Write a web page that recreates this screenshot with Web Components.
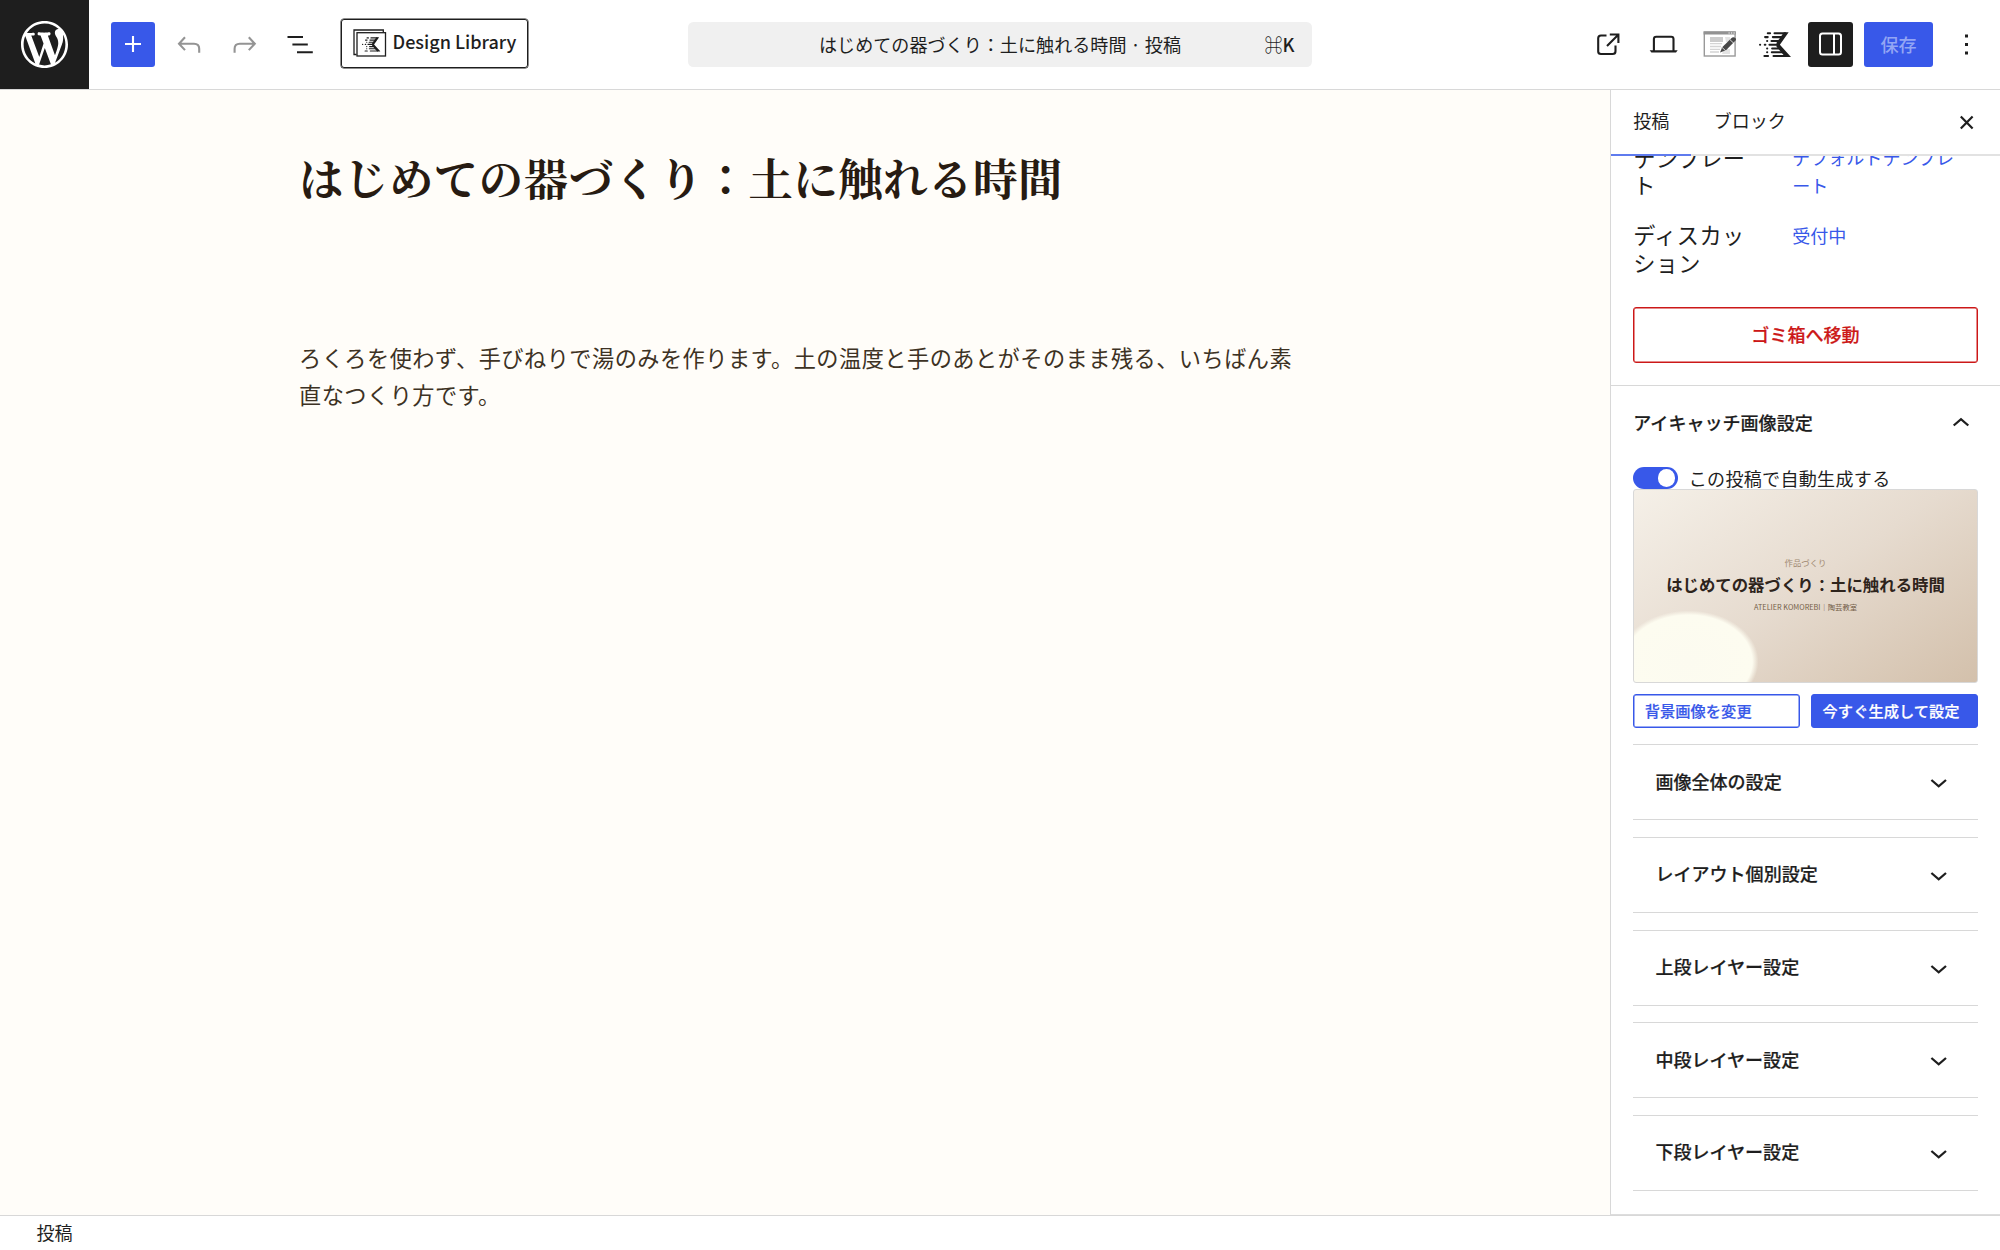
<!DOCTYPE html>
<html lang="ja">
<head>
<meta charset="utf-8">
<title>はじめての器づくり：土に触れる時間</title>
<style>
  body {
    margin: 0;
    width: 2000px;
    height: 1250px;
    overflow: hidden;
    background: #fff;
    color: #1e1e1e;
    font-family: "Noto Sans CJK JP", sans-serif;
    font-size: 18.06px;
    line-height: 1.4;
  }
</style>
</head>
<body>
<post-editor>
  <editor-header slot="header" doc-title="はじめての器づくり：土に触れる時間 · 投稿"></editor-header>
  <post-canvas slot="canvas">
    <span slot="title">はじめての器づくり：土に触れる時間</span>
    ろくろを使わず、手びねりで湯のみを作ります。土の温度と手のあとがそのまま残る、いちばん素直なつくり方です。
  </post-canvas>
  <settings-sidebar slot="sidebar">
    <settings-row label="テンプレート">デフォルトテンプレート</settings-row>
    <settings-row label="ディスカッション">受付中</settings-row>
    <thumbnail-panel slot="panel" panel-title="アイキャッチ画像設定">
      <fold-section>画像全体の設定</fold-section>
      <fold-section>レイアウト個別設定</fold-section>
      <fold-section>上段レイヤー設定</fold-section>
      <fold-section>中段レイヤー設定</fold-section>
      <fold-section>下段レイヤー設定</fold-section>
    </thumbnail-panel>
  </settings-sidebar>
  <span slot="footer">投稿</span>
</post-editor>

<script>
const K_MARK = `
  <g stroke="currentColor" stroke-width="6" stroke-linecap="round" fill="none">
    <path d="M26 4h7M46 4h32M18 15.200h8M41 15.200h28M24 26.400h.5M37 26.400h24M3 37.600h.5M17 37.600h2M31 37.600h24M24 48.800h.5M39 48.800h20M24 60h.5M38 60h32M16 71.200h11M43 71.200h36"/>
  </g>
  <path d="M74 1H88L62 37.600 95 74H78L52 44V32z" fill="currentColor"/>`;

// every icon is [width, height, viewBox, markup]
const ICONS = {
  wordpress: [47, 47, "0 0 20 20", `<path fill="currentColor" d="M20 10c0-5.51-4.49-10-10-10C4.48 0 0 4.49 0 10c0 5.52 4.48 10 10 10 5.51 0 10-4.48 10-10zM7.78 15.37L4.37 6.22c.55-.02 1.17-.08 1.17-.08.5-.06.44-1.13-.06-1.11 0 0-1.45.11-2.37.11-.18 0-.37 0-.58-.01C4.12 2.69 6.87 1.11 10 1.11c2.33 0 4.45.87 6.05 2.34-.68-.11-1.65.39-1.65 1.58 0 .74.45 1.36.9 2.1.35.61.55 1.36.55 2.46 0 1.49-1.4 5-1.4 5l-3.03-8.37c.54-.02.82-.17.82-.17.5-.05.44-1.25-.06-1.22 0 0-1.44.12-2.38.12-.87 0-2.33-.12-2.33-.12-.5-.03-.56 1.2-.06 1.22l.92.08 1.26 3.41zM17.41 10c.24-.64.74-1.87.43-4.25.7 1.29 1.05 2.71 1.05 4.25 0 3.29-1.73 6.24-4.4 7.78.97-2.59 1.94-5.2 2.92-7.78zM6.1 18.09C3.12 16.65 1.11 13.53 1.11 10c0-1.3.23-2.48.72-3.59C3.25 10.3 4.67 14.2 6.1 18.09zm4.03-6.63l2.58 6.98c-.86.29-1.76.45-2.71.45-.79 0-1.57-.11-2.29-.33.81-2.38 1.62-4.74 2.42-7.1z"/>`],
  plus: [34, 34, "0 0 34 34", `<path d="M9 17h16M17 9v16" fill="none" stroke="currentColor" stroke-width="2.1"/>`],
  undo: [34, 34, "0 0 34 34", `<path d="M13 10.300 7 16.700l6 6.400M7.500 16.700H22q5.200 0 5.200 5v4" fill="none" stroke="currentColor" stroke-width="2.1"/>`],
  redo: [34, 34, "0 0 34 34", `<path d="M21.800 10.300 27.800 16.700l-6 6.400M27.300 16.700H12.800q-5.200 0-5.200 5v4" fill="none" stroke="currentColor" stroke-width="2.1"/>`],
  list: [34, 34, "0 0 34 34", `<path d="M4.500 10H20M9.400 17.500H24.800M14 25.200H29.800" fill="none" stroke="currentColor" stroke-width="2.1"/>`],
  library: [34, 28, "0 0 34 28", `
    <path d="M3.500 25.500H1V1H30.300V3.500" fill="none" stroke="currentColor" stroke-width="1.3"/>
    <rect x="4" y="3.700" width="28.500" height="23.300" fill="#fff" stroke="currentColor" stroke-width="1.3"/>
    <svg x="9" y="8" width="18.500" height="15" viewBox="0 0 95 76">${K_MARK}</svg>`],
  external: [34, 34, "0 0 34 34", `<path d="M14.500 8.500H9Q6.200 8.500 6.200 11.300V24.500Q6.200 27 9 27H20.600Q23.500 27 23.500 24.200V18.500M17.800 7.500H26.400V16M26 8 15 19" fill="none" stroke="currentColor" stroke-width="2.1"/>`],
  laptop: [34, 34, "0 0 34 34", `<path d="M6.900 24V12Q6.900 9.700 9.200 9.700H24.200Q26.500 9.700 26.500 12V24" fill="none" stroke="currentColor" stroke-width="2.1"/><path d="M2.700 23.200H30.700L29 25.500H4.400z" fill="currentColor"/>`],
  template: [34, 28, "0 0 34 28", `
    <rect x="1.300" y="2" width="30.800" height="24" fill="#fff" stroke="#999" stroke-width="1.4"/>
    <path d="M.6 1.400H32.800V4.600H.6z" fill="#929292"/>
    <path d="M25.500 3h1.200M28 3h1.200M30.500 3h1.200" stroke="#fff" stroke-width="1.1"/>
    <path d="M7 7h13v5H7z" fill="#ccc"/>
    <path d="M7 13.700H19M7 16.500H18M7 19.300H17M7 22H16" stroke="#d4d4d4" stroke-width="1.3"/>
    <path d="M22 7h5v5h-4zM21 19h6v5h-8z" fill="#e4e4e4"/>
    <path d="M17 22.500 19.200 17.200 28.300 8.300Q30.500 6.300 32.800 8.600L33 10 23 20.200z" fill="#484848"/>
    <path d="M27 9.700 30.700 13.200M19 17.400 22.700 20.800" stroke="#fff" stroke-width=".8"/>`],
  kmark: [32, 25.6, "0 0 95 76", K_MARK],
  columns: [34, 34, "0 0 34 34", `<rect x="6" y="6.500" width="21" height="21" rx="2.500" fill="none" stroke="currentColor" stroke-width="2"/><path d="M20 6.500v21" stroke="currentColor" stroke-width="2"/>`],
  more: [34, 34, "0 0 34 34", `<path d="M15 7.500h3v3h-3zM15 16h3v3h-3zM15 24.500h3v3h-3z" fill="currentColor"/>`],
  close: [34, 34, "0 0 34 34", `<path d="M10.800 11.500 22.600 23.500M22.600 11.500 10.800 23.500" fill="none" stroke="currentColor" stroke-width="2.2"/>`],
  up: [34, 34, "0 0 34 34", `<path d="M9.700 20.500 17 14.200 24.300 20.500" fill="none" stroke="currentColor" stroke-width="2.3"/>`],
  down: [34, 34, "0 0 34 34", `<path d="M9.400 14 16.700 20.300 24 14" fill="none" stroke="currentColor" stroke-width="2.3"/>`]
};

class EditorIcon extends HTMLElement {
  constructor() {
    super();
    this.attachShadow({ mode: "open" });
  }

  connectedCallback() {
    const [width, height, box, markup] = ICONS[this.getAttribute("name")];
    this.shadowRoot.innerHTML = `
    <style>
    :host { display: block; flex: none; }
    svg { display: block; }
    </style>
    <svg width="${width}" height="${height}" viewBox="${box}">${markup}</svg>
    `;
  }
}

class ToolButton extends HTMLElement {
  constructor() {
    super();
    this.attachShadow({ mode: "open" });
  }

  connectedCallback() {
    this.shadowRoot.innerHTML = `
    <style>
    :host {
      display: flex;
      align-items: center;
      justify-content: center;
      flex: none;
      width: 44.4px;
      height: 44.4px;
      border-radius: 3px;
    }
    :host([variant="primary"]) { background: #3858e9; color: #fff; }
    :host([variant="pressed"]) { background: #1e1e1e; color: #fff; }
    :host([disabled]) { color: #949494; }
    </style>
    <editor-icon name="${this.getAttribute("icon")}"></editor-icon>
    `;
  }
}

class EditorHeader extends HTMLElement {
  constructor() {
    super();
    this.attachShadow({ mode: "open" });
  }

  connectedCallback() {
    this.shadowRoot.innerHTML = `
    <style>
    :host {
      display: grid;
      grid-template-columns: 688px 624px 688px;
      align-items: center;
      height: 89px;
      border-bottom: 1px solid #d8d8d8;
      background: #fff;
    }
    .start, .end {
      display: flex;
      align-items: center;
      gap: 11.1px;
    }
    .logo {
      display: flex;
      align-items: center;
      justify-content: center;
      width: 89px;
      height: 89px;
      margin-right: 11px;
      background: #1e1e1e;
      color: #fff;
    }
    .library {
      display: flex;
      align-items: center;
      box-sizing: border-box;
      width: 187px;
      height: 49.5px;
      margin-left: 7.5px;
      margin-top: -2.5px;
      padding-left: 11.5px;
      border: 1px solid #1e1e1e;
      border-radius: 3px;
      gap: 5.5px;
      font-weight: 500;
      white-space: nowrap;
      box-shadow: 0 0 0 0.5px #1e1e1e;
    }
    .library span { margin-top: -3px; font-size: 18.06px; }
    .command {
      display: flex;
      align-items: center;
      height: 44.5px;
      border-radius: 5.5px;
      background: #f0f0f0;
    }
    .command .doc { flex: 1; padding-left: 131px; letter-spacing: 0.04px; white-space: nowrap; }
    .command .key { padding-right: 17.5px; font-weight: 500; }
    .end { justify-content: flex-end; padding-right: 11.3px; }
    .save {
      display: flex;
      align-items: center;
      justify-content: center;
      width: 69.4px;
      height: 44.4px;
      border-radius: 3px;
      background: #3858e9;
      color: #93a5f4;
      font-weight: 500;
    }
    </style>
    <div class="start">
      <div class="logo"><editor-icon name="wordpress"></editor-icon></div>
      <tool-button icon="plus" variant="primary"></tool-button>
      <tool-button icon="undo" disabled></tool-button>
      <tool-button icon="redo" disabled></tool-button>
      <tool-button icon="list"></tool-button>
      <div class="library"><editor-icon name="library"></editor-icon><span>Design Library</span></div>
    </div>
    <div class="command">
      <span class="doc">${this.getAttribute("doc-title")}</span>
      <span class="key">⌘K</span>
    </div>
    <div class="end">
      <tool-button icon="external"></tool-button>
      <tool-button icon="laptop"></tool-button>
      <tool-button icon="template"></tool-button>
      <tool-button icon="kmark"></tool-button>
      <tool-button icon="columns" variant="pressed"></tool-button>
      <div class="save">保存</div>
      <tool-button icon="more"></tool-button>
    </div>
    `;
  }
}

class PostCanvas extends HTMLElement {
  constructor() {
    super();
    this.attachShadow({ mode: "open" });
    this.shadowRoot.innerHTML = `
    <style>
    :host {
      display: block;
      padding: 55px 300px 0 299px;
      background: #fffdf9;
    }
    h1 {
      margin: 0 0 129.5px;
      color: #271b12;
      font: bold 44.4px/64px "Noto Serif CJK JP", "Noto Serif JP", "Noto Sans CJK JP", serif;
      letter-spacing: 0.55px;
      white-space: nowrap;
    }
    p {
      margin: 0;
      width: 1000px;
      color: #3d3224;
      font-size: 22.2px;
      line-height: 37.7px;
      letter-spacing: 0.47px;
    }
    </style>
    <h1><slot name="title"></slot></h1>
    <p><slot></slot></p>
    `;
  }
}

class SettingsRow extends HTMLElement {
  constructor() {
    super();
    this.attachShadow({ mode: "open" });
  }

  connectedCallback() {
    this.shadowRoot.innerHTML = `
    <style>
    :host {
      display: grid;
      grid-template-columns: 122px 170px;
      column-gap: 37px;
      line-height: 27.8px;
      line-break: anywhere;
    }
    .label { font-size: 22.2px; letter-spacing: 0.4px; margin-top: -0.5px; }
    .value { color: #3858e9; }
    </style>
    <div class="label">${this.getAttribute("label")}</div>
    <div class="value"><slot></slot></div>
    `;
  }
}

class SettingsSidebar extends HTMLElement {
  constructor() {
    super();
    this.attachShadow({ mode: "open" });
    this.shadowRoot.innerHTML = `
    <style>
    :host {
      display: flex;
      flex-direction: column;
      box-sizing: border-box;
      overflow: hidden;
      border-left: 1px solid #d8d8d8;
      border-bottom: 1px solid #ddd;
      background: #fff;
    }
    .tabs {
      display: flex;
      flex: none;
      height: 64px;
      border-bottom: 2px solid #e2e2e2;
    }
    .tab {
      padding: 0 22.2px;
      line-height: 60px;
      white-space: nowrap;
    }
    .tab.active {
      height: 64px;
      border-bottom: 2px solid #5f7bee;
    }
    editor-icon { margin: 15px 16.5px 0 auto; }
    .scroll {
      display: flex;
      flex-direction: column;
      flex: 1;
      min-height: 0;
      overflow: hidden;
    }
    .rows {
      display: flex;
      flex-direction: column;
      gap: 22.2px;
      flex: none;
      margin-top: -12px;
      padding: 0 22.2px;
    }
    .trash {
      display: flex;
      align-items: center;
      justify-content: center;
      box-sizing: border-box;
      flex: none;
      height: 55.6px;
      margin: 30.2px 22.2px 22.6px;
      border: 1px solid #cc1818;
      border-radius: 3px;
      box-shadow: inset 0 0 0 0.5px #cc1818;
      color: #cc1818;
      font-weight: 500;
      -webkit-text-stroke: 0.2px;
    }
    </style>
    <div class="tabs">
      <div class="tab active">投稿</div>
      <div class="tab">ブロック</div>
      <editor-icon name="close"></editor-icon>
    </div>
    <div class="scroll">
      <div class="rows"><slot></slot></div>
      <div class="trash">ゴミ箱へ移動</div>
      <slot name="panel"></slot>
    </div>
    `;
  }
}

class ThumbnailPreview extends HTMLElement {
  constructor() {
    super();
    this.attachShadow({ mode: "open" });
    this.shadowRoot.innerHTML = `
    <style>
    :host {
      display: flex;
      flex-direction: column;
      align-items: center;
      box-sizing: border-box;
      height: 194px;
      padding-top: 65px;
      border: 1px solid #d8d8d8;
      border-radius: 3px;
      background:
        radial-gradient(ellipse 70px 51px at 54.5px 171.5px, #fcfbf0 0, #fdfcf0 91%, rgba(253, 252, 240, 0) 100%),
        linear-gradient(146deg, #f5f0e8 0%, #e6dbcf 50%, #d3c0ab 100%);
      white-space: nowrap;
    }
    .upper { color: #a18a72; font-size: 8.4px; line-height: 14px; }
    .middle { margin-top: 3px; color: #2e241c; font-size: 16.4px; font-weight: bold; line-height: 24px; }
    .lower { margin-top: 4px; color: #755f49; font-size: 7.3px; line-height: 14px; }
    </style>
    <div class="upper">作品づくり</div>
    <div class="middle">はじめての器づくり：土に触れる時間</div>
    <div class="lower">ATELIER KOMOREBI｜陶芸教室</div>
    `;
  }
}

class ThumbnailPanel extends HTMLElement {
  constructor() {
    super();
    this.attachShadow({ mode: "open" });
  }

  connectedCallback() {
    this.shadowRoot.innerHTML = `
    <style>
    :host {
      display: block;
      border-top: 1px solid #d8d8d8;
      padding: 0 22.2px;
    }
    .title {
      display: flex;
      align-items: center;
      justify-content: space-between;
      height: 72px;
      font-weight: 500;
      -webkit-text-stroke: 0.2px;
    }
    .toggle {
      display: flex;
      align-items: center;
      gap: 11px;
      height: 22.2px;
      margin-top: 8.8px;
      letter-spacing: 0.3px;
    }
    .switch {
      display: flex;
      align-items: center;
      justify-content: flex-end;
      box-sizing: border-box;
      width: 44.5px;
      height: 22.2px;
      padding-right: 2.5px;
      border-radius: 12px;
      background: #3858e9;
    }
    .knob { width: 17.5px; height: 17.5px; border-radius: 50%; background: #fff; }
    .actions {
      display: flex;
      gap: 11px;
      margin: 11px 0 16.6px;
    }
    .actions div {
      flex: 1;
      box-sizing: border-box;
      height: 33.5px;
      padding-left: 10.6px;
      border: 1px solid #3858e9;
      border-radius: 3px;
      box-shadow: inset 0 0 0 0.5px #3858e9;
      color: #3858e9;
      font-size: 15.28px;
      font-weight: 500;
      line-height: 30px;
      -webkit-text-stroke: 0.2px;
    }
    .actions .primary { background: #3858e9; color: #fff; }
    </style>
    <div class="title">${this.getAttribute("panel-title")}<editor-icon name="up"></editor-icon></div>
    <div class="toggle"><div class="switch"><div class="knob"></div></div>この投稿で自動生成する</div>
    <thumbnail-preview></thumbnail-preview>
    <div class="actions"><div>背景画像を変更</div><div class="primary">今すぐ生成して設定</div></div>
    <slot></slot>
    `;
  }
}

class FoldSection extends HTMLElement {
  constructor() {
    super();
    this.attachShadow({ mode: "open" });
    this.shadowRoot.innerHTML = `
    <style>
    :host {
      display: flex;
      align-items: center;
      justify-content: space-between;
      box-sizing: border-box;
      height: 76px;
      margin-bottom: 16.65px;
      padding: 0 22.2px;
      border-top: 1px solid #d8d8d8;
      border-bottom: 1px solid #d8d8d8;
      font-weight: 500;
      -webkit-text-stroke: 0.2px;
    }
    span { margin-top: -2px; }
    editor-icon { margin-top: 2px; }
    </style>
    <span><slot></slot></span>
    <editor-icon name="down"></editor-icon>
    `;
  }
}

class PostEditor extends HTMLElement {
  constructor() {
    super();
    this.attachShadow({ mode: "open" });
    this.shadowRoot.innerHTML = `
    <style>
    :host {
      display: grid;
      grid-template: 90px 1125px 35px / 1610px 390px;
    }
    .header, .footer { grid-column: 1 / 3; }
    .body { display: grid; }
    .footer {
      box-sizing: border-box;
      border-top: 1px solid #d8d8d8;
      padding-left: 36.5px;
      line-height: 33px;
      background: #fff;
    }
    </style>
    <div class="header"><slot name="header"></slot></div>
    <div class="body"><slot name="canvas"></slot></div>
    <div class="body"><slot name="sidebar"></slot></div>
    <div class="footer"><slot name="footer"></slot></div>
    `;
  }
}

window.customElements.define("editor-icon", EditorIcon);
window.customElements.define("tool-button", ToolButton);
window.customElements.define("editor-header", EditorHeader);
window.customElements.define("post-canvas", PostCanvas);
window.customElements.define("settings-row", SettingsRow);
window.customElements.define("settings-sidebar", SettingsSidebar);
window.customElements.define("thumbnail-preview", ThumbnailPreview);
window.customElements.define("thumbnail-panel", ThumbnailPanel);
window.customElements.define("fold-section", FoldSection);
window.customElements.define("post-editor", PostEditor);
</script>
</body>
</html>
